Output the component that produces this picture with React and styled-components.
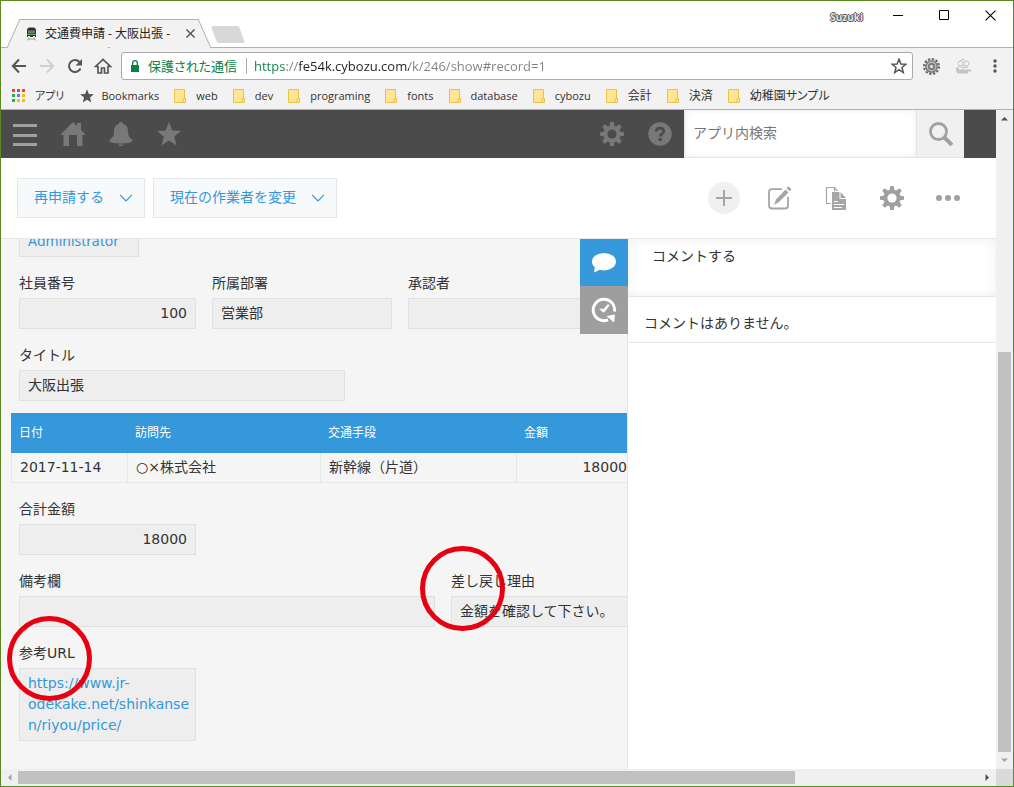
import React from "react";
import styled, { createGlobalStyle, css } from "styled-components";

const jp = `"Noto Sans CJK JP", sans-serif`;
const uiFont = `"Open Sans", ${jp}`;
const bodyFont = `"DejaVu Sans", ${jp}`;
const blue = "#3498db";
const line = "#e3e7e8";

const Global = createGlobalStyle`
  * { box-sizing: border-box; }
  body { margin: 0; background: #fff; font-family: ${bodyFont}; font-size: 14px; line-height: 21px; color: #333; }
  button, input, textarea { font: inherit; color: inherit; margin: 0; padding: 0; border: 0; border-radius: 0; background: none; outline: 0; }
  button { display: flex; align-items: center; justify-content: center; cursor: pointer; flex: none; }
  a { color: inherit; text-decoration: none; }
  svg { display: block; flex: none; }
`;

/* ---------- browser frame ---------- */

const Window = styled.div`
  display: flex;
  flex-direction: column;
  min-height: 100vh;
  border: 1px solid #5b8a1f;
  background: #fff;
`;

const TitleBar = styled.header`
  display: flex;
  height: 47px;
  border-bottom: 1px solid #b0b0b0;
  font-family: ${uiFont};
`;

const Tab = styled.div`
  position: relative;
  display: flex;
  align-items: center;
  width: 192px;
  height: 29px;
  margin: 18px 0 0 12px;
  padding: 0 10px 0 13px;
  font-size: 12px;
  color: #222;
  &::before,
  &::after {
    content: "";
    position: absolute;
    top: 0;
    bottom: 0;
    width: 52%;
    background: #f2f2f2;
    border-top: 1px solid #b0b0b0;
  }
  &::before {
    left: 0;
    border-left: 1px solid #b0b0b0;
    transform: skewX(-24deg);
  }
  &::after {
    right: 0;
    border-right: 1px solid #b0b0b0;
    transform: skewX(24deg);
  }
  & > * {
    position: relative;
    z-index: 1;
  }
`;

const TabTitle = styled.span`
  flex: 1;
  margin-left: 8px;
  white-space: nowrap;
  overflow: hidden;
`;

const NewTab = styled.button`
  width: 28px;
  height: 17px;
  margin: 25px 0 0 9px;
  border-radius: 2px;
  background: #d8d8d8;
  transform: skewX(20deg);
`;

const WindowControls = styled.div`
  display: flex;
  align-items: center;
  height: 28px;
  margin-left: auto;
`;

const Profile = styled.span`
  margin-right: 12px;
  padding-top: 4px;
  font-size: 10px;
  font-weight: 700;
  color: #e4e4e4;
  text-shadow: 1px 0 #555, -1px 0 #555, 0 1px #555, 0 -1px #555;
`;

const ControlButton = styled.button`
  width: 46px;
  height: 28px;
`;

const NavBar = styled.nav`
  display: flex;
  align-items: center;
  height: 36px;
  padding: 0 2px 0 4px;
  background: #f2f2f2;
  font-family: ${uiFont};
`;

const NavButton = styled.button`
  width: ${(p) => p.$w || 28}px;
  height: 28px;
`;

const Omnibox = styled.div`
  display: flex;
  align-items: center;
  flex: 1;
  height: 28px;
  margin: 0 2px 0 4px;
  padding: 0 5px 0 9px;
  border: 1px solid #a9a9a9;
  border-radius: 3px;
  background: #fff;
`;

const Secure = styled.span`
  margin-left: 9px;
  padding-right: 9px;
  border-right: 1px solid #a9a9a9;
  color: #0b8043;
  font-size: 13px;
  line-height: 16px;
  font-feature-settings: "palt";
`;

const UrlInput = styled.input`
  flex: 1;
  min-width: 0;
  height: 24px;
  margin-left: 7px;
  font-size: 13px;
  color: transparent;
  background: linear-gradient(
    90deg,
    #0b8043 31px,
    #808080 31px,
    #808080 45px,
    #222 45px,
    #222 155px,
    #808080 155px
  );
  background-clip: text;
  -webkit-background-clip: text;
`;

const BookmarkBar = styled.nav`
  display: flex;
  align-items: center;
  gap: 15px;
  height: 26px;
  padding: 0 0 2px 11px;
  border-bottom: 1px solid #b0b0b0;
  background: #f2f2f2;
  font-family: ${uiFont};
  font-size: 11px;
  white-space: nowrap;
`;

const Bookmark = styled.a`
  display: flex;
  align-items: center;
  gap: ${(p) => p.$gap || 10}px;
  font-size: ${(p) => (p.$jp ? 12 : 11)}px;
  font-feature-settings: "palt";
`;

/* ---------- page viewport and its scroll bars ---------- */

const Viewport = styled.div`
  flex: 1;
  display: grid;
  grid-template-columns: minmax(0, 1fr) 17px;
  grid-template-rows: 1fr 17px;
`;

const Page = styled.div`
  display: flex;
  flex-direction: column;
  min-width: 0;
  background: #fff;
`;

const Track = styled.div`
  display: flex;
  flex-direction: ${(p) => (p.$vertical ? "column" : "row")};
  background: #f0f0f0;
`;

const TrackButton = styled.button`
  width: 17px;
  height: 17px;
`;

const Thumb = styled.div`
  flex: ${(p) => p.$grow};
  margin: ${(p) => (p.$vertical ? "0 2px" : "2px 0")};
  background: ${(p) => (p.$empty ? "transparent" : "#c1c1c1")};
`;

const Corner = styled.div`
  background: #dadada;
`;

/* ---------- application ---------- */

const AppHeader = styled.header`
  display: flex;
  height: 48px;
  padding-right: 32px;
  background: #4b4b4b;
`;

const HeaderButton = styled.button`
  width: 48px;
  height: 48px;
  ${(p) =>
    p.$first &&
    css`
      margin-left: auto;
    `}
`;

const Search = styled.form`
  display: flex;
  width: 280px;
  border-bottom: 1px solid ${line};
  background: #fff;
`;

const SearchInput = styled.input`
  flex: 1;
  min-width: 0;
  padding: 0 8px;
  border-left: 1px solid ${line};
  box-shadow: inset 0 0 6px #ececec;
  &::placeholder {
    color: #777;
    opacity: 1;
  }
`;

const SearchButton = styled.button`
  width: 48px;
  border-left: 1px solid ${line};
  background: #f0f0f0;
`;

const ActionBar = styled.div`
  display: flex;
  align-items: center;
  gap: 8px;
  height: 81px;
  padding: 0 32px 1px 16px;
  border-bottom: 1px solid ${line};
`;

const ActionButton = styled.button`
  gap: 16px;
  height: 40px;
  padding: 0 12px 0 16px;
  border: 1px solid ${line};
  background: #f7f9fa;
  color: ${blue};
`;

const Tools = styled.div`
  display: flex;
  gap: 24px;
  margin-left: auto;
`;

const ToolButton = styled.button`
  width: 32px;
  height: 32px;
  border-radius: 50%;
  background: ${(p) => (p.$filled ? "#f0f0f0" : "none")};
`;

const Body = styled.main`
  position: relative;
  flex: 1;
  display: flex;
  min-height: 0;
`;

const RecordPane = styled.section`
  flex: 1;
  min-width: 0;
  padding: 0 0 24px 10px;
  overflow: hidden;
  background: #f5f5f5;
`;

const Row = styled.div`
  display: flex;
  gap: 16px;
  padding: 16px 0 0 8px;
`;

/* The record is scrolled, so its creator row shows only the lower part. */
const ScrolledRow = styled(Row)`
  margin-top: -14px;
  padding-top: 0;
`;

const FieldBox = styled.div`
  position: relative;
  flex: none;
  width: ${(p) => p.$w}px;
`;

const Label = styled.div`
  height: 20px;
  margin-bottom: 5px;
  line-height: 20px;
`;

const Value = styled.div`
  min-height: 31px;
  padding: 4px ${(p) => (p.$right ? 8 : 4)}px 4px 8px;
  border: 1px solid #e0e0e0;
  background: #eee;
  line-height: 21px;
  text-align: ${(p) => (p.$right ? "right" : "left")};
  word-break: break-word;
  overflow-wrap: anywhere;
`;

const Link = styled.a`
  color: ${blue};
`;

const UserLink = styled(Link)`
  font-family: "Noto Sans", sans-serif;
`;

const Ring = styled.span`
  position: absolute;
  z-index: 2;
  top: ${(p) => p.$top}px;
  left: ${(p) => p.$left}px;
  width: 85px;
  height: 85px;
  border: 5px solid #e60012;
  border-radius: 50%;
  pointer-events: none;
`;

const Table = styled.table`
  width: 624px;
  margin-top: 12px;
  table-layout: fixed;
  border-collapse: separate;
  border-spacing: 0;
  th {
    height: 40px;
    padding: 0 8px;
    background: ${blue};
    color: #fff;
    font-size: 12px;
    font-weight: 400;
    text-align: left;
  }
  td {
    height: 30px;
    padding: 0 8px;
    border: 1px solid ${line};
    border-width: 0 0 1px 1px;
  }
  td:last-child {
    text-align: right;
  }
`;

const Col = styled.col`
  width: ${(p) => p.$w}px;
`;

const SideTabs = styled.div`
  position: absolute;
  z-index: 3;
  top: 0;
  right: 368px;
`;

const SideTab = styled.button`
  width: 48px;
  height: ${(p) => (p.$active ? 47 : 48)}px;
  background: ${(p) => (p.$active ? blue : "#9e9e9e")};
`;

const CommentPane = styled.aside`
  width: 369px;
  flex: none;
  border-left: 1px solid ${line};
`;

const CommentInput = styled.textarea`
  display: block;
  width: 100%;
  height: 58px;
  padding: 7px 24px 6px;
  border-bottom: 1px solid ${line};
  box-shadow: inset 0 0 12px #eee;
  resize: none;
  &::placeholder {
    color: #333;
    opacity: 1;
  }
`;

const NoComments = styled.p`
  margin: 0;
  padding: 16px 16px 8px;
  border-bottom: 1px solid ${line};
`;

/* ---------- icons ---------- */

const Gear = ({ size = 24, color, hole, teeth = 8, inner = 4.6 }) => (
  <svg width={size} height={size} viewBox="0 0 24 24">
    {Array.from({ length: teeth }, (_, i) => (
      <path
        key={i}
        d="M10.2 0h3.6l.8 5h-5.200z"
        fill={color}
        transform={`rotate(${(i * 360) / teeth} 12 12)`}
      />
    ))}
    <circle cx="12" cy="12" r="8.600" fill={color} />
    <circle cx="12" cy="12" r={inner} fill={hole} />
  </svg>
);

const ExtensionGear = () => (
  <svg width="17" height="17" viewBox="0 0 24 24">
    <circle cx="12" cy="12" r="10.500" fill="none" stroke="#666" strokeWidth="3" strokeDasharray="3.300 2.200" />
    <circle cx="12" cy="12" r="9" fill="#777" />
    <circle cx="12" cy="12" r="6" fill="none" stroke="#bbb" strokeWidth="2" />
    <circle cx="12" cy="12" r="2.500" fill="#ddd" />
  </svg>
);

const TrainIcon = () => (
  <svg width="11" height="14" viewBox="0 0 11 14">
    <path d="M1 3q0-2 2-2.500h5q2 .5 2 2.500v7H1z" fill="#333" />
    <path d="M2 3.500h7v3H2z" fill="#777" />
    <path d="M1 7h9v1H1z" fill="#4caf50" />
    <path d="M2 9h2v1H2zM7 9h2v1H7z" fill="#fff" />
    <path d="M3 10.500L1.500 13.500M8 10.500l1.500 3M2.500 12h6" stroke="#999" fill="none" />
  </svg>
);

const Cross = ({ size, color, width }) => (
  <svg width={size} height={size} viewBox="0 0 10 10">
    <path d="M.5.5l9 9M9.500.5l-9 9" stroke={color} strokeWidth={width} />
  </svg>
);

const ArrowIcon = ({ color, flip }) => (
  <svg width="16" height="16" viewBox="0 0 16 16">
    <path
      d="M15 8H2M8 1.500L1.800 8 8 14.500"
      fill="none"
      stroke={color}
      strokeWidth="2"
      transform={flip ? "rotate(180 8 8)" : undefined}
    />
  </svg>
);

const ReloadIcon = () => (
  <svg width="16" height="16" viewBox="0 0 16 16">
    <path d="M13.500 10.500A6 6 0 1 1 12.500 4" fill="none" stroke="#555" strokeWidth="2" />
    <path d="M15 1v6.500H8.500z" fill="#555" />
  </svg>
);

const ChromeHomeIcon = () => (
  <svg width="18" height="16" viewBox="0 0 18 16">
    <path
      d="M1.500 8.500L9 1.500l7.500 7H14v6.500h-3.500v-5h-3v5H4V8.500z"
      fill="none"
      stroke="#555"
      strokeWidth="1.700"
    />
  </svg>
);

const LockIcon = () => (
  <svg width="8" height="12" viewBox="0 0 8 12">
    <path d="M0 5h8v7H0z" fill="#0b8043" />
    <path d="M1.700 5.500V3a2.300 2.300 0 0 1 4.600 0v2.500" fill="none" stroke="#0b8043" strokeWidth="1.300" />
  </svg>
);

const starPath = "M12 0l3.300 8.500 8.700.5-6.800 5.600 2.300 8.900L12 18.500l-7.500 5 2.300-8.900L0 9l8.700-.5z";

const StarIcon = ({ size, color, outline }) => (
  <svg width={size} height={size} viewBox="-2 -2 28 28">
    <path
      d={starPath}
      fill={outline ? "none" : color}
      stroke={outline ? color : "none"}
      strokeWidth="2.600"
    />
  </svg>
);

const KebabIcon = () => (
  <svg width="4" height="14" viewBox="0 0 4 14">
    {[2, 7, 12].map((y) => (
      <circle key={y} cx="2" cy={y} r="1.700" fill="#555" />
    ))}
  </svg>
);

const DebugIcon = () => (
  <svg width="17" height="16" viewBox="0 0 17 16" fill="none" stroke="#c4c4c4">
    <circle cx="5.500" cy="5.500" r="2.500" />
    <circle cx="11.500" cy="5.500" r="2.500" />
    <path d="M5 3l3-2 2 2M7 6l3 4M4 8l4 2 5-1" />
    <path d="M1 10.500h3M1 12.500h15M2 14.500h11" strokeWidth="2" />
  </svg>
);

const AppsIcon = () => {
  const colors = ["#ea4335", "#ea4335", "#ea4335", "#34a853", "#4285f4", "#fbbc05", "#34a853", "#fbbc05", "#fbbc05"];
  return (
    <svg width="13" height="13" viewBox="0 0 13 13">
      {colors.map((c, i) => (
        <rect key={i} x={(i % 3) * 5} y={Math.floor(i / 3) * 5} width="3" height="3" fill={c} />
      ))}
    </svg>
  );
};

const FolderIcon = () => (
  <svg width="12" height="14" viewBox="0 0 12 14">
    <path d="M.5.5h10v13H.5z" fill="#ffe694" stroke="#e8c14a" />
    <path d="M9.500 9.500h2v4h-3z" fill="#ffe694" stroke="#e8c14a" />
  </svg>
);

const MenuIcon = () => (
  <svg width="24" height="24" viewBox="0 0 24 24">
    <path d="M0 2h24v3H0zM0 12h24v3H0zM0 21h24v3H0z" fill="#a0a0a0" />
  </svg>
);

const HomeIcon = () => (
  <svg width="24" height="24" viewBox="0 0 24 24">
    <path d="M12 0l4 4V1h4v7l4 4v1h-2.500v11H16V13H8v11H2.500V13H0v-1z" fill="#787878" />
  </svg>
);

const BellIcon = () => (
  <svg width="24" height="24" viewBox="0 0 24 24">
    <path
      d="M12 0q2 0 2.200 2C18 3 19 6 19 10q0 4.500 3 6.500 2 1.500 1.500 2.500-2 2.500-11.500 2.500T.5 19Q0 18 2 16.500 5 14.500 5 10c0-4 1-7 4.800-8Q10 0 12 0z"
      fill="#787878"
    />
    <path d="M9 22.500h6Q14.500 24 12 24t-3-1.500z" fill="#787878" />
  </svg>
);

const HelpIcon = () => (
  <svg width="24" height="24" viewBox="0 0 24 24">
    <circle cx="12" cy="12" r="11.700" fill="#787878" />
    <path d="M8.300 9.500q0-3.300 3.700-3.300t3.700 3q0 1.600-1.900 2.800-1.600 1-1.600 2.400" fill="none" stroke="#4b4b4b" strokeWidth="2.800" />
    <path d="M10.600 16h3.200v3h-3.200z" fill="#4b4b4b" />
  </svg>
);

const SearchIcon = () => (
  <svg width="24" height="24" viewBox="0 0 24 24" fill="none" stroke="#a0a0a0">
    <circle cx="9.500" cy="9.500" r="8" strokeWidth="2.800" />
    <path d="M15.500 15.500l7.500 7.500" strokeWidth="4" />
  </svg>
);

const ChevronIcon = () => (
  <svg width="12" height="8" viewBox="0 0 12 8">
    <path d="M0 1l6 6 6-6" fill="none" stroke={blue} strokeWidth="1.200" />
  </svg>
);

const PlusIcon = () => (
  <svg width="16" height="16" viewBox="0 0 16 16">
    <path d="M8 0v16M0 8h16" stroke="#a5a5a5" strokeWidth="2" />
  </svg>
);

const EditIcon = () => (
  <svg width="24" height="24" viewBox="0 0 24 24">
    <path d="M14 3.200H4Q1 3.200 1 6.200v13Q1 22.500 4 22.500h13q3 0 3-3V11" fill="none" stroke="#a5a5a5" strokeWidth="1.800" />
    <path d="M6 19l2-5.500L17.500 3.500l3 3L11 16z" fill="#a5a5a5" />
    <path d="M18.500 2.300L20.500.3l3 3-2 2z" fill="#a5a5a5" />
  </svg>
);

const CopyIcon = () => (
  <svg width="22" height="24" viewBox="0 0 22 24">
    <path d="M6 17.500H1.500V1.500h8l3 3.500M9.500 1.500v4" fill="none" stroke="#a5a5a5" strokeWidth="1.200" />
    <path d="M7 6h7.500v7H21v11H7z" fill="#a5a5a5" />
    <path d="M15.500 6L21 12h-5.500z" fill="#a5a5a5" />
    <path d="M9 15.500h4M9 18.500h10M9 21.500h8" stroke="#fff" />
  </svg>
);

const MoreIcon = () => (
  <svg width="24" height="6" viewBox="0 0 24 6">
    {[3, 12, 21].map((x) => (
      <circle key={x} cx={x} cy="3" r="3" fill="#a0a0a0" />
    ))}
  </svg>
);

const BubbleIcon = () => (
  <svg width="24" height="20" viewBox="0 0 24 20">
    <ellipse cx="12" cy="8.700" rx="12" ry="8.700" fill="#fff" />
    <path d="M3 13l-1 6.500L9.500 16z" fill="#fff" />
  </svg>
);

const HistoryIcon = () => (
  <svg width="26" height="26" viewBox="0 0 26 26">
    <path d="M23.500 14.500A10.700 10.700 0 1 0 17 22.800" fill="none" stroke="#fff" strokeWidth="3" />
    <path d="M15.500 19l8.500-1.500-1 8z" fill="#fff" />
    <path d="M8 11.500l4.500.5L17 7l1.500 1.500-5 6.500q-1.500 1-2.500-.5z" fill="#fff" />
  </svg>
);

const Triangle = ({ turn, color }) => (
  <svg width="7" height="7" viewBox="0 0 7 7">
    <path d="M0 5.500h7L3.500 2z" fill={color} transform={`rotate(${turn} 3.500 3.500)`} />
  </svg>
);

const folders = ["web", "dev", "programing", "fonts", "database", "cybozu", "会計", "決済", "幼稚園サンプル"];

const Field = ({ label, width, right, ring, children }) => (
  <FieldBox $w={width}>
    <Label>{label}</Label>
    <Value $right={right}>{children}</Value>
    {ring && <Ring $left={ring[0]} $top={ring[1]} />}
  </FieldBox>
);

export default function App() {
  return (
    <Window>
      <Global />
      <TitleBar>
        <Tab>
          <TrainIcon />
          <TabTitle>交通費申請 - 大阪出張 -</TabTitle>
          <button aria-label="タブを閉じる">
            <Cross size={9} color="#555" width={1.6} />
          </button>
        </Tab>
        <NewTab aria-label="新しいタブ" />
        <WindowControls>
          <Profile>Suzuki</Profile>
          <ControlButton aria-label="最小化">
            <svg width="10" height="10" viewBox="0 0 10 10"><path d="M0 5.500h10" stroke="#000" /></svg>
          </ControlButton>
          <ControlButton aria-label="最大化">
            <svg width="10" height="10" viewBox="0 0 10 10"><path d="M.5.5h9v9h-9z" fill="none" stroke="#000" /></svg>
          </ControlButton>
          <ControlButton aria-label="閉じる">
            <Cross size={11} color="#000" width={1} />
          </ControlButton>
        </WindowControls>
      </TitleBar>

      <NavBar>
        <NavButton aria-label="戻る"><ArrowIcon color="#555" /></NavButton>
        <NavButton aria-label="進む"><ArrowIcon color="#d0d0d0" flip /></NavButton>
        <NavButton aria-label="再読み込み"><ReloadIcon /></NavButton>
        <NavButton aria-label="ホーム"><ChromeHomeIcon /></NavButton>
        <Omnibox>
          <LockIcon />
          <Secure>保護された通信</Secure>
          <UrlInput aria-label="アドレス" defaultValue="https://fe54k.cybozu.com/k/246/show#record=1" />
          <button aria-label="ブックマーク"><StarIcon size={16} color="#555" outline /></button>
        </Omnibox>
        <NavButton $w={32} aria-label="設定"><ExtensionGear /></NavButton>
        <NavButton $w={32} aria-label="デバッグ"><DebugIcon /></NavButton>
        <NavButton $w={32} aria-label="メニュー"><KebabIcon /></NavButton>
      </NavBar>

      <BookmarkBar>
        <Bookmark href="#"><AppsIcon />アプリ</Bookmark>
        <Bookmark href="#" $gap={6}><StarIcon size={16} color="#555" />Bookmarks</Bookmark>
        {folders.map((name) => (
          <Bookmark key={name} href="#" $jp={name.charCodeAt(0) > 255}>
            <FolderIcon />
            {name}
          </Bookmark>
        ))}
      </BookmarkBar>

      <Viewport>
        <Page>
          <AppHeader>
            <HeaderButton aria-label="メニュー"><MenuIcon /></HeaderButton>
            <HeaderButton aria-label="ポータル"><HomeIcon /></HeaderButton>
            <HeaderButton aria-label="通知"><BellIcon /></HeaderButton>
            <HeaderButton aria-label="ブックマーク"><StarIcon size={28} color="#787878" /></HeaderButton>
            <HeaderButton $first aria-label="設定"><Gear color="#787878" hole="#4b4b4b" /></HeaderButton>
            <HeaderButton aria-label="ヘルプ"><HelpIcon /></HeaderButton>
            <Search>
              <SearchInput aria-label="アプリ内検索" placeholder="アプリ内検索" />
              <SearchButton type="button" aria-label="検索"><SearchIcon /></SearchButton>
            </Search>
          </AppHeader>

          <ActionBar>
            <ActionButton>再申請する<ChevronIcon /></ActionButton>
            <ActionButton>現在の作業者を変更<ChevronIcon /></ActionButton>
            <Tools>
              <ToolButton $filled aria-label="追加"><PlusIcon /></ToolButton>
              <ToolButton aria-label="編集"><EditIcon /></ToolButton>
              <ToolButton aria-label="再利用"><CopyIcon /></ToolButton>
              <ToolButton aria-label="アプリの設定"><Gear color="#a0a0a0" hole="#fff" /></ToolButton>
              <ToolButton aria-label="オプション"><MoreIcon /></ToolButton>
            </Tools>
          </ActionBar>

          <Body>
            <RecordPane>
              <ScrolledRow>
                <FieldBox $w={120}>
                  <Value><UserLink href="#">Administrator</UserLink></Value>
                </FieldBox>
              </ScrolledRow>
              <Row>
                <Field label="社員番号" width={177} right>100</Field>
                <Field label="所属部署" width={180}>営業部</Field>
                <Field label="承認者" width={180} />
              </Row>
              <Row>
                <Field label="タイトル" width={326}>大阪出張</Field>
              </Row>
              <Table>
                <colgroup>
                  <Col $w={116} />
                  <Col $w={193} />
                  <Col $w={196} />
                  <Col $w={119} />
                </colgroup>
                <thead>
                  <tr><th>日付</th><th>訪問先</th><th>交通手段</th><th>金額</th></tr>
                </thead>
                <tbody>
                  <tr><td>2017-11-14</td><td>○×株式会社</td><td>新幹線（片道）</td><td>18000</td></tr>
                </tbody>
              </Table>
              <Row>
                <Field label="合計金額" width={177} right>18000</Field>
              </Row>
              <Row>
                <Field label="備考欄" width={416} />
                <Field label="差し戻し理由" width={416} ring={[-31, -25]}>金額を確認して下さい。</Field>
              </Row>
              <Row>
                <Field label="参考URL" width={177} ring={[-12, -27]}>
                  <Link href="#">https://www.jr-odekake.net/shinkansen/riyou/price/</Link>
                </Field>
              </Row>
            </RecordPane>
            <CommentPane>
              <CommentInput aria-label="コメントする" placeholder="コメントする" />
              <NoComments>コメントはありません。</NoComments>
            </CommentPane>
            <SideTabs>
              <SideTab $active aria-label="コメント"><BubbleIcon /></SideTab>
              <SideTab aria-label="変更履歴"><HistoryIcon /></SideTab>
            </SideTabs>
          </Body>
        </Page>

        <Track $vertical>
          <TrackButton aria-label="上へ"><Triangle turn={0} color="#505050" /></TrackButton>
          <Thumb $vertical $empty $grow={225} />
          <Thumb $vertical $grow={400} />
          <TrackButton aria-label="下へ"><Triangle turn={180} color="#a3a3a3" /></TrackButton>
        </Track>
        <Track>
          <TrackButton aria-label="左へ"><Triangle turn={270} color="#a3a3a3" /></TrackButton>
          <Thumb $grow={777} />
          <Thumb $empty $grow={184} />
          <TrackButton aria-label="右へ"><Triangle turn={90} color="#505050" /></TrackButton>
        </Track>
        <Corner />
      </Viewport>
    </Window>
  );
}
